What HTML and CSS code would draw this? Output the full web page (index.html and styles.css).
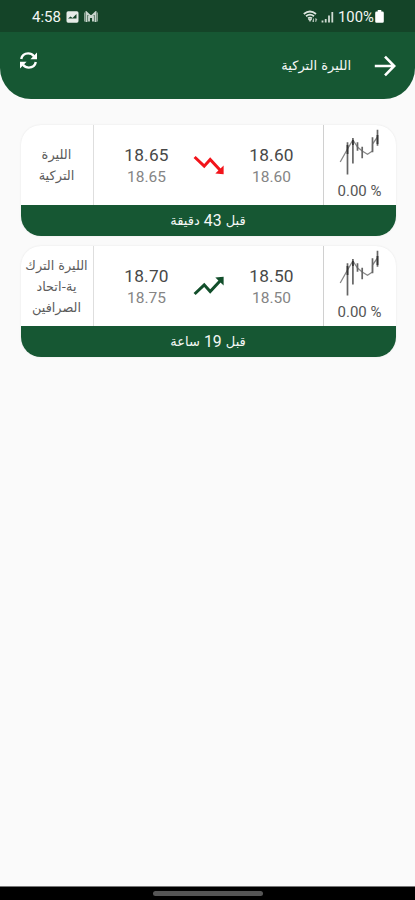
FILE: index.html
```html
<!DOCTYPE html>
<html lang="ar">
<head>
<meta charset="utf-8">
<title>الليرة التركية</title>
<link rel="stylesheet" href="styles.css">
</head>
<body>
<svg class="defs" width="0" height="0">
  <symbol id="spark" viewBox="0 0 44 50">
    <path d="M2.200 34 9.500 21l5.400-9 4.600 7 4.700 4 5.300 3.300 5-3.300V16l5-7" fill="none" stroke="#888" stroke-width="1.300"/>
    <path d="M9.500 14.300V46.500M14.900 10v25.500M24.200 18.700v11.600M19.500 14.300v8.400M34.500 9.300v15M39.500 1.700v16" fill="none" stroke="#666" stroke-width="1.700"/>
    <path d="M9.500 17v9M14.900 12v5M39.500 7v9" fill="none" stroke="#333" stroke-width="1.800"/>
  </symbol>
</svg>
<div class="screen">
  <header class="header">
    <div class="status">
      <span class="clock">4:58</span>
      <svg class="pic" viewBox="0 0 13 12"><rect x=".5" y=".3" width="12" height="11.4" rx="1.6" fill="#e6ece7"/><path d="M2 7.500 4.600 5.500l1.900 1.600L10.500 3v4.500z" fill="#144428"/></svg>
      <svg class="mail" viewBox="0 0 14 12"><path d="M2.500 11V1.500l4.500 4.300 4.500-4.300V11M5 10.500V5M9 10.500V5" fill="none" stroke="#c9d5cd" stroke-width="1.900"/><path d="M.7 1.500v9M13.300 1.500v9" stroke="#a9bcae" stroke-width="1"/></svg>
      <span class="gap"></span>
      <svg class="wifi" viewBox="0 0 15 13"><path d="M.8 4Q7-1 13 4M3 6.300q4-3.300 8 0M5 8.400q2-1.600 4 0" fill="none" stroke="#dce5de" stroke-width="1.800"/><path d="m5.300 9 1.700 2.500L8.700 9zM10.500 8.500v3.500l-1-1M12.800 12V8.500l1 1" fill="#dce5de" stroke="#c5d1c8" stroke-width=".7"/></svg>
      <svg class="signal" viewBox="0 0 13 12"><path d="M1.500 11.500v-2M4.700 11.500V8M8 11.500V4.500M11.300 11.500V1" stroke="#cfdbd2" stroke-width="1.800"/></svg>
      <span class="charge">100%</span>
      <svg class="battery" viewBox="0 0 9 13"><path d="M2.700 0h3.600v1.600H7.500Q8.800 1.600 8.800 3v8.400Q8.800 12.800 7.500 12.800h-6Q.2 12.800.2 11.400V3q0-1.400 1.300-1.400h1.200z" fill="#fff"/></svg>
    </div>
    <div class="bar">
      <svg class="refresh" viewBox="0 0 19 19"><path d="M2.200 8Q3.300 2.500 9.200 2.400q3.500 0 5.800 2.800M16.800 11Q15.700 16.500 9.800 16.600q-3.500 0-5.800-2.800" fill="none" stroke="#fff" stroke-width="2.400"/><path d="M18 1.600v6.600h-6.600zM1 17.400v-6.600h6.600z" fill="#fff"/></svg>
      <h1 class="title" dir="rtl">الليرة التركية</h1>
      <svg class="back" viewBox="0 0 22 22"><path d="M.8 11H20M11 1.600 20.200 11 11 20.400" fill="none" stroke="#fff" stroke-width="2.600"/></svg>
    </div>
  </header>
  <main class="list">
    <article class="card">
      <div class="row">
        <div class="name" dir="rtl">الليرة<br>التركية</div>
        <div class="rates">
          <div class="price"><b>18.65</b><span>18.65</span></div>
          <svg class="trend" viewBox="0 0 32 20"><path d="m1.600 2 9.600 9.200 6-6.800L27 15" fill="none" stroke="#f2141b" stroke-width="3"/><path d="M30.600 10.500v8.700l-8.300-.6z" fill="#f2141b"/></svg>
          <div class="price"><b>18.60</b><span>18.60</span></div>
        </div>
        <div class="change">
          <svg class="spark"><use href="#spark"/></svg>
          <span>0.00 %</span>
        </div>
      </div>
      <div class="age" dir="rtl"><span>قبل <i>43</i> دقيقة</span></div>
    </article>
    <article class="card">
      <div class="row">
        <div class="name wide" dir="rtl">الليرة الترك<br>ية-اتحاد<br>الصرافين</div>
        <div class="rates">
          <div class="price"><b>18.70</b><span>18.75</span></div>
          <svg class="trend" viewBox="0 0 32 20"><path d="m1.600 18 9.600-9.200 6 6.800L27 5" fill="none" stroke="#124f2b" stroke-width="3"/><path d="M30.600 9.500V.8l-8.300.6z" fill="#124f2b"/></svg>
          <div class="price"><b>18.50</b><span>18.50</span></div>
        </div>
        <div class="change">
          <svg class="spark"><use href="#spark"/></svg>
          <span>0.00 %</span>
        </div>
      </div>
      <div class="age" dir="rtl"><span>قبل <i>19</i> ساعة</span></div>
    </article>
  </main>
  <footer class="nav"><div class="handle"></div></footer>
</div>
</body>
</html>
```
FILE: styles.css
```css
* { box-sizing: border-box; }
body { margin: 0; background: #fafafa; font-family: Roboto, "DejaVu Sans", sans-serif; }
svg { display: block; flex: none; }
.screen { height: 900px; display: flex; flex-direction: column; }
.header { height: 99px; background: #165733; border-radius: 0 0 31px 31px; overflow: hidden; }
.status { height: 32px; padding: 1px 31px 0 32px; display: flex; align-items: center; background: #144428; color: #f3f6f4; font-size: 15px; }
.clock { width: 34px; }
.pic { width: 13px; height: 12px; }
.mail { width: 14px; height: 12px; margin-left: 5px; }
.gap { flex: 1; }
.wifi { width: 15px; height: 13px; }
.signal { width: 13px; height: 12px; margin: 0 4px 0 3px; }
.charge { width: 37px; font-size: 14.8px; white-space: nowrap; }
.battery { width: 9px; height: 13px; }
.bar { height: 67px; display: flex; align-items: center; padding: 0 19px; }
.refresh { width: 19px; height: 19px; margin-top: -10px; }
.title { flex: 1; margin: 0 23px 0 0; color: #f5f8f6; font: 400 13px/20px "DejaVu Sans", sans-serif; }
.back { width: 22px; height: 22px; }
.list { flex: 1; padding: 26px 19.5px 0 20.5px; display: flex; flex-direction: column; gap: 10px; }
.card { height: 111px; border-radius: 20px; overflow: hidden; background: #fff; box-shadow: 0 0 2px #e4e4e4; }
.row { height: 80px; display: flex; }
.name { width: 73px; border-right: 1px solid #dedede; display: grid; align-content: center; text-align: center; color: #5c5c5c; font: 13px/21px "DejaVu Sans", sans-serif; white-space: nowrap; }
.wide { font-size: 12.8px; }
.rates { width: 230px; border-right: 1px solid #d0d0d0; display: flex; align-items: center; justify-content: space-between; padding: 2px 28px 0 30px; }
.price { width: 46px; display: flex; flex-direction: column; align-items: center; }
.price b { font-weight: 400; font-size: 17.3px; line-height: 22px; color: #484848; letter-spacing: .2px; }
.price span { font-size: 15.5px; line-height: 22px; color: #858585; }
.trend { width: 32px; height: 20px; margin-top: -2px; }
.change { flex: 1; display: flex; flex-direction: column; align-items: center; padding-top: 3px; color: #555; font-size: 15px; line-height: 22px; white-space: nowrap; }
.spark { width: 44px; height: 50px; margin-bottom: 2px; }
.age { height: 31px; background: #165733; color: #f4f8f5; text-align: center; font: 13px/32px "DejaVu Sans", sans-serif; }
.age i { font: 400 15.8px/20px Roboto, sans-serif; vertical-align: -1px; }
.nav { height: 14px; background: #000; border-top: 1px solid #777; display: flex; justify-content: center; padding-top: 4px; }
.handle { width: 110px; height: 5px; border-radius: 3px; background: #555; }
```
